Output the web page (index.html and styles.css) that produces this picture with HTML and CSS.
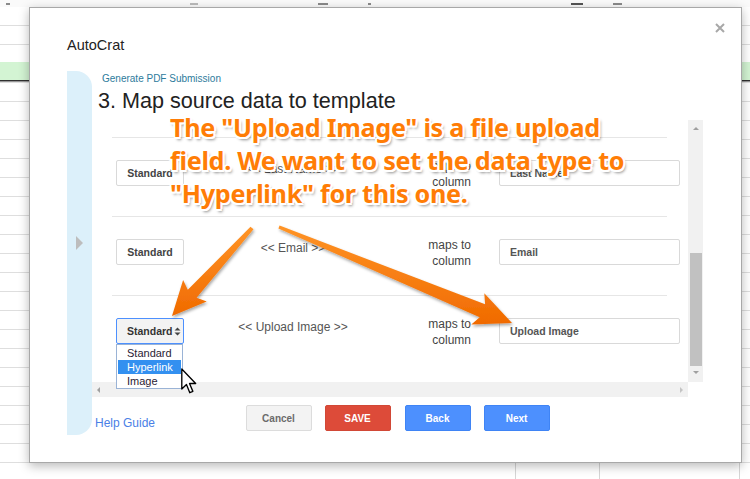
FILE: index.html
```html
<!DOCTYPE html>
<html>
<head>
<meta charset="utf-8">
<link rel="stylesheet" href="styles.css">
</head>
<body>
<div class="sheet">
  <div class="toolbar">
    <span class="tb tb1"></span><span class="tb tb2"></span><span class="tb tb3"></span><span class="tb tb4"></span><span class="tb tb5"></span><span class="tb tb6"></span>
  </div>
</div>

<div class="dialog">
  <svg class="close" width="10" height="10" viewBox="0 0 10 10"><path d="M1 1L9 9M9 1L1 9" stroke="#a8a8a8" stroke-width="2"/></svg>
  <div class="dlg-title">AutoCrat</div>
  <div class="dlg-body">
    <div class="sidebar"><span class="tri"></span></div>
    <div class="main">
      <div class="crumb">Generate PDF Submission</div>
      <h1 class="step">3. Map source data to template</h1>
      <div class="scroller">
        <div class="viewport">
          <div class="rows">
            <div class="row">
              <div class="cells">
                <div class="type-btn">Standard</div>
                <div class="src">&lt;&lt; Last Name &gt;&gt;</div>
                <div class="maps">maps to<br>column</div>
                <div class="field">Last Name</div>
              </div>
            </div>
            <div class="row">
              <div class="cells">
                <div class="type-btn">Standard</div>
                <div class="src">&lt;&lt; Email &gt;&gt;</div>
                <div class="maps">maps to<br>column</div>
                <div class="field">Email</div>
              </div>
            </div>
            <div class="row">
              <div class="cells">
                <div class="type-sel">Standard<svg width="7" height="9" viewBox="0 0 7 9"><path d="M0.5 3.6L3.5 0.4L6.5 3.6Z M0.5 5.4L3.5 8.6L6.5 5.4Z" fill="#444"/></svg></div>
                <div class="src">&lt;&lt; Upload Image &gt;&gt;</div>
                <div class="maps">maps to<br>column</div>
                <div class="field">Upload Image</div>
              </div>
            </div>
          </div>
        </div>
        <div class="vbar">
          <span class="arr-up"></span>
          <span class="thumb"></span>
          <span class="arr-down"></span>
        </div>
        <div class="hbar">
          <span class="arr-left"></span>
          <span class="arr-right"></span>
        </div>
        <div class="corner"></div>
      </div>
      <div class="footer">
        <a class="help">Help Guide</a>
        <div class="btns">
          <div class="btn cancel">Cancel</div>
          <div class="btn save">SAVE</div>
          <div class="btn blue back">Back</div>
          <div class="btn blue">Next</div>
        </div>
        <div></div>
      </div>
    </div>
  </div>
</div>

<div class="dropdown">
  <div class="opt">Standard</div>
  <div class="opt sel">Hyperlink</div>
  <div class="opt">Image</div>
</div>

<svg class="arrows" width="750" height="479" viewBox="0 0 750 479">
  <defs>
    <linearGradient id="og" x1="0" y1="0" x2="0" y2="1">
      <stop offset="0" stop-color="#ff9426"/>
      <stop offset="1" stop-color="#f06a00"/>
    </linearGradient>
    <filter id="sh" x="-20%" y="-20%" width="140%" height="140%">
      <feDropShadow dx="1" dy="2" stdDeviation="1.5" flood-color="#000" flood-opacity="0.35"/>
    </filter>
  </defs>
  <polygon filter="url(#sh)" fill="url(#og)" points="250.5,226.7 187.8,289.8 183.1,280.0 172,316 206.7,301.6 196.6,297.8 253.5,229.3"/>
  <polygon filter="url(#sh)" fill="url(#og)" points="279.6,225.6 485.1,304.3 484.3,293.2 512,323 471.3,324.6 479.7,317.3 278.4,228.4"/>
</svg>

<div class="note">The "Upload Image" is a file upload<br>field. We want to set the data type to<br>"Hyperlink" for this one.</div>

<svg class="cursor" width="16" height="27" viewBox="0 0 12 20">
  <path d="M0.6 0.6 L0.6 15.6 L4.1 12.3 L6.6 18.4 L8.9 17.4 L6.4 11.5 L11 11.5 Z" fill="#fff" stroke="#000" stroke-width="1" stroke-linejoin="round"/>
</svg>
</body>
</html>
```

FILE: styles.css
```css
html, body {
  margin: 0;
  padding: 0;
}
body {
  width: 750px;
  height: 479px;
  overflow: hidden;
  position: relative;
  font-family: "Liberation Sans", Arial, sans-serif;
  background: #fff;
}

/* spreadsheet backdrop */
.sheet {
  position: absolute;
  left: 0;
  top: 0;
  width: 750px;
  height: 479px;
  background:
    linear-gradient(#303030, #303030) 0 80px / 100% 1.5px no-repeat,
    linear-gradient(#d3f4d3, #d3f4d3) 0 62px / 100% 18px no-repeat,
    linear-gradient(to right, transparent 515px, #d6d6d6 515px, #d6d6d6 516px, transparent 516px, transparent 599px, #d6d6d6 599px, #d6d6d6 600px, transparent 600px, transparent 739px, #d6d6d6 739px, #d6d6d6 740px, transparent 740px),
    repeating-linear-gradient(to bottom, transparent 0, transparent 18px, #dedede 18px, #dedede 19px) 0 7px / 100% 100%,
    #fff;
}
.toolbar {
  height: 7px;
  background: #fafafa;
  display: flex;
  align-items: flex-end;
  padding-left: 6px;
}
.tb {
  display: block;
  height: 2px;
  background: #8a8a8a;
  margin-bottom: 2px;
}
.tb1 { width: 4px; }
.tb2 { width: 8px; margin-left: 180px; background: #bbb; }
.tb3 { width: 10px; margin-left: 120px; }
.tb4 { width: 3px; margin-left: 40px; }
.tb5 { width: 12px; margin-left: 200px; background: #555; }
.tb6 { width: 9px; margin-left: 30px; }

/* dialog */
.dialog {
  position: absolute;
  left: 29px;
  top: 7px;
  width: 711px;
  height: 454px;
  border: 1px solid #a8a8a8;
  background: #fff;
  box-shadow: 0 3px 10px rgba(0, 0, 0, 0.28);
}
.close {
  position: absolute;
  right: 16px;
  top: 15px;
}
.dlg-title {
  padding: 29px 0 0 37px;
  height: 16px;
  font-size: 14.5px;
  line-height: 16px;
  color: #222;
  margin-bottom: 18px;
}
.dlg-body {
  display: flex;
  align-items: flex-start;
  padding-left: 37px;
}
.sidebar {
  width: 25px;
  height: 364px;
  background: #dcf0fa;
  border-radius: 0 16px 16px 0;
  box-sizing: border-box;
  padding: 165px 0 0 9px;
}
.tri {
  display: block;
  width: 0;
  height: 0;
  border-top: 7px solid transparent;
  border-bottom: 7px solid transparent;
  border-left: 7px solid #bdbdbd;
}
.main {
  width: 611px;
}
.crumb {
  margin-top: 2px;
  padding-left: 10px;
  font-size: 10px;
  line-height: 12px;
  color: #2d7b9c;
}
.step {
  margin: 4px 0 0;
  padding-left: 6px;
  font-size: 21.6px;
  font-weight: normal;
  line-height: 24px;
  color: #222;
}

/* scroll area */
.scroller {
  margin-top: 7px;
  display: grid;
  grid-template-columns: 596px 15px;
  grid-template-rows: 262px 15px;
}
.viewport {
  position: relative;
}
.rows {
  padding-top: 17px;
}
.row {
  margin-left: 20px;
  width: 555px;
  height: 79px;
  box-sizing: border-box;
  border-top: 1px solid #e6e6e6;
  padding: 22px 0 0 4px;
}
.cells {
  width: 564px;
  display: grid;
  grid-template-columns: 68px 218px 69px 209px;
  align-items: start;
}
.type-btn, .type-sel {
  height: 26px;
  box-sizing: border-box;
  border: 1px solid #d9d9d9;
  border-radius: 2px;
  background: #fff;
  font-size: 10.5px;
  font-weight: bold;
  color: #444;
  display: flex;
  align-items: center;
  justify-content: center;
}
.type-sel {
  border-color: #4d90fe;
  background: #f3f3f3;
  justify-content: flex-start;
  padding-left: 10px;
  gap: 1px;
  color: #333;
}
.src {
  margin-top: 2px;
  text-align: center;
  font-size: 12px;
  line-height: 14px;
  color: #555;
}
.maps {
  margin-top: -2px;
  text-align: right;
  font-size: 12px;
  line-height: 16px;
  color: #444;
}
.field {
  justify-self: end;
  width: 181px;
  height: 26px;
  box-sizing: border-box;
  border: 1px solid #d9d9d9;
  border-radius: 2px;
  padding-left: 10px;
  display: flex;
  align-items: center;
  font-size: 10.5px;
  font-weight: bold;
  color: #555;
}

.vbar {
  background: #f1f1f1;
  position: relative;
  display: flex;
  flex-direction: column;
  align-items: center;
}
.arr-up {
  margin-top: 7px;
  width: 0;
  height: 0;
  border-left: 3px solid transparent;
  border-right: 3px solid transparent;
  border-bottom: 3px solid #a0a0a0;
}
.thumb {
  margin-top: 123px;
  width: 12px;
  margin-left: 1px;
  height: 113px;
  background: #c1c1c1;
}
.arr-down {
  margin-top: 5px;
  width: 0;
  height: 0;
  border-left: 3px solid transparent;
  border-right: 3px solid transparent;
  border-top: 3px solid #a0a0a0;
}
.hbar {
  background: #f1f1f1;
  display: flex;
  align-items: center;
  justify-content: space-between;
  padding: 0 5px;
}
.arr-left {
  width: 0;
  height: 0;
  border-top: 3px solid transparent;
  border-bottom: 3px solid transparent;
  border-right: 3px solid #a0a0a0;
}
.arr-right {
  width: 0;
  height: 0;
  border-top: 3px solid transparent;
  border-bottom: 3px solid transparent;
  border-left: 3px solid #c4c4c4;
}
.corner {
  background: #fff;
}

/* footer */
.footer {
  margin-top: 8px;
  display: grid;
  grid-template-columns: 1fr auto 1fr;
}
.help {
  align-self: end;
  padding: 0 0 1px 3px;
  font-size: 12px;
  line-height: 14px;
  color: #4a80e6;
}
.btns {
  display: flex;
  gap: 13px;
}
.btn {
  width: 66px;
  height: 26px;
  box-sizing: border-box;
  border-radius: 2px;
  border: 1px solid transparent;
  display: flex;
  align-items: center;
  justify-content: center;
  font-size: 10px;
  font-weight: bold;
  color: #fff;
}
.cancel {
  background: #f3f3f3;
  border-color: #dcdcdc;
  color: #6b6b6b;
}
.save {
  background: #dd4b39;
  border-color: #d14836;
}
.blue {
  background: #4d90fe;
  border-color: #3f84f5;
}
.back {
  margin-left: 1px;
}

/* open select list */
.dropdown {
  position: absolute;
  left: 116px;
  top: 344px;
  width: 67px;
  height: 45px;
  box-sizing: border-box;
  border: 1px solid #9ab3d6;
  background: #fff;
  padding: 1px 1px 0;
}
.opt {
  height: 14px;
  line-height: 14px;
  padding-left: 9px;
  font-size: 11px;
  color: #2a2233;
}
.opt.sel {
  background: #3390f0;
  color: #fff;
}

.arrows {
  position: absolute;
  left: 0;
  top: 0;
}

.note {
  position: absolute;
  left: 170px;
  top: 111px;
  font-family: "Noto Sans", "Open Sans", sans-serif;
  font-weight: bold;
  font-size: 25.2px;
  line-height: 33px;
  letter-spacing: -0.3px;
  color: #ff7d06;
  white-space: nowrap;
  text-shadow:
    1px 0 0 #fff, -1px 0 0 #fff, 0 1px 0 #fff, 0 -1px 0 #fff,
    1.5px 1.5px 0 #fff, -1.5px -1.5px 0 #fff, 1.5px -1.5px 0 #fff, -1.5px 1.5px 0 #fff,
    2px 0 0 #fff, -2px 0 0 #fff, 0 2px 0 #fff, 0 -2px 0 #fff,
    2px 3px 3px rgba(0, 0, 0, 0.45);
}

.cursor {
  position: absolute;
  left: 181px;
  top: 368px;
}
```
